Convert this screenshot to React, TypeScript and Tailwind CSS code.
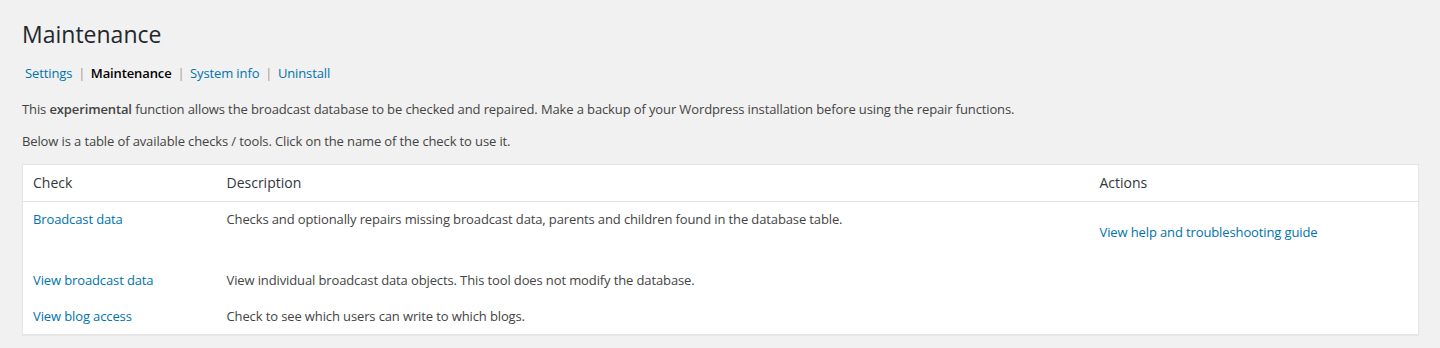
export default function App() {
  const rows = [
    {
      name: "Broadcast data",
      desc: "Checks and optionally repairs missing broadcast data, parents and children found in the database table.",
      action: "View help and troubleshooting guide",
    },
    {
      name: "View broadcast data",
      desc: "View individual broadcast data objects. This tool does not modify the database.",
    },
    {
      name: "View blog access",
      desc: "Check to see which users can write to which blogs.",
    },
  ];

  return (
    <div className="min-h-screen w-full bg-[#f1f1f1] text-[#444] text-[13px] tracking-[-0.12px] font-['Open_Sans',sans-serif] pl-[22px] pr-[21px] pt-[19px] pb-4">
      <h1 className="text-[23px] leading-[30px] font-normal tracking-normal text-[#23282d]">Maintenance</h1>

      {/* sub navigation */}
      <ul className="flex items-center mt-[11px] leading-[26px] pl-[3px]">
        <li>
          <a href="#" className="text-[#0073aa]">Settings</a>
          <span className="text-[#a89494] ml-[6px] mr-[5.5px]">|</span>
        </li>
        <li>
          <a href="#" className="text-black font-semibold">Maintenance</a>
          <span className="text-[#a89494] ml-[6px] mr-[5.5px]">|</span>
        </li>
        <li>
          <a href="#" className="text-[#0073aa]">System info</a>
          <span className="text-[#a89494] ml-[6px] mr-[5.5px]">|</span>
        </li>
        <li>
          <a href="#" className="text-[#0073aa]">Uninstall</a>
        </li>
      </ul>

      <p className="mt-[14px] leading-[19.5px]">
        This <strong className="font-semibold">experimental</strong> function allows the broadcast database to be checked and repaired. Make a backup of your Wordpress installation before using the repair functions.
      </p>
      <p className="mt-[12px] leading-[19.5px]">
        Below is a table of available checks / tools. Click on the name of the check to use it.
      </p>

      <table className="mt-[13px] w-full border border-[#e5e5e5] bg-white shadow-[0_1px_1px_rgba(0,0,0,0.04)] border-collapse">
        <thead>
          <tr className="border-b border-[#e1e1e1]">
            <th className="w-[194px] text-left font-normal tracking-normal text-[14px] leading-[19.6px] text-[#32373c] px-[10px] py-[8px]">Check</th>
            <th className="w-[873px] text-left font-normal tracking-normal text-[14px] leading-[19.6px] text-[#32373c] px-[10px] py-[8px]">Description</th>
            <th className="text-left font-normal tracking-normal text-[14px] leading-[19.6px] text-[#32373c] px-[10px] py-[8px]">Actions</th>
          </tr>
        </thead>
        <tbody>
          {rows.map((r) => (
            <tr key={r.name}>
              <td className="align-top px-[10px] py-[8px] leading-[19.5px]">
                <a href="#" className="text-[#0073aa]">{r.name}</a>
              </td>
              <td className="align-top px-[10px] py-[8px] leading-[19.5px]">{r.desc}</td>
              <td className="align-top px-[10px] py-[8px] leading-[19.5px]">
                {r.action && (
                  <p className="my-[13px]">
                    <a href="#" className="text-[#0073aa]">{r.action}</a>
                  </p>
                )}
              </td>
            </tr>
          ))}
        </tbody>
      </table>
    </div>
  );
}
